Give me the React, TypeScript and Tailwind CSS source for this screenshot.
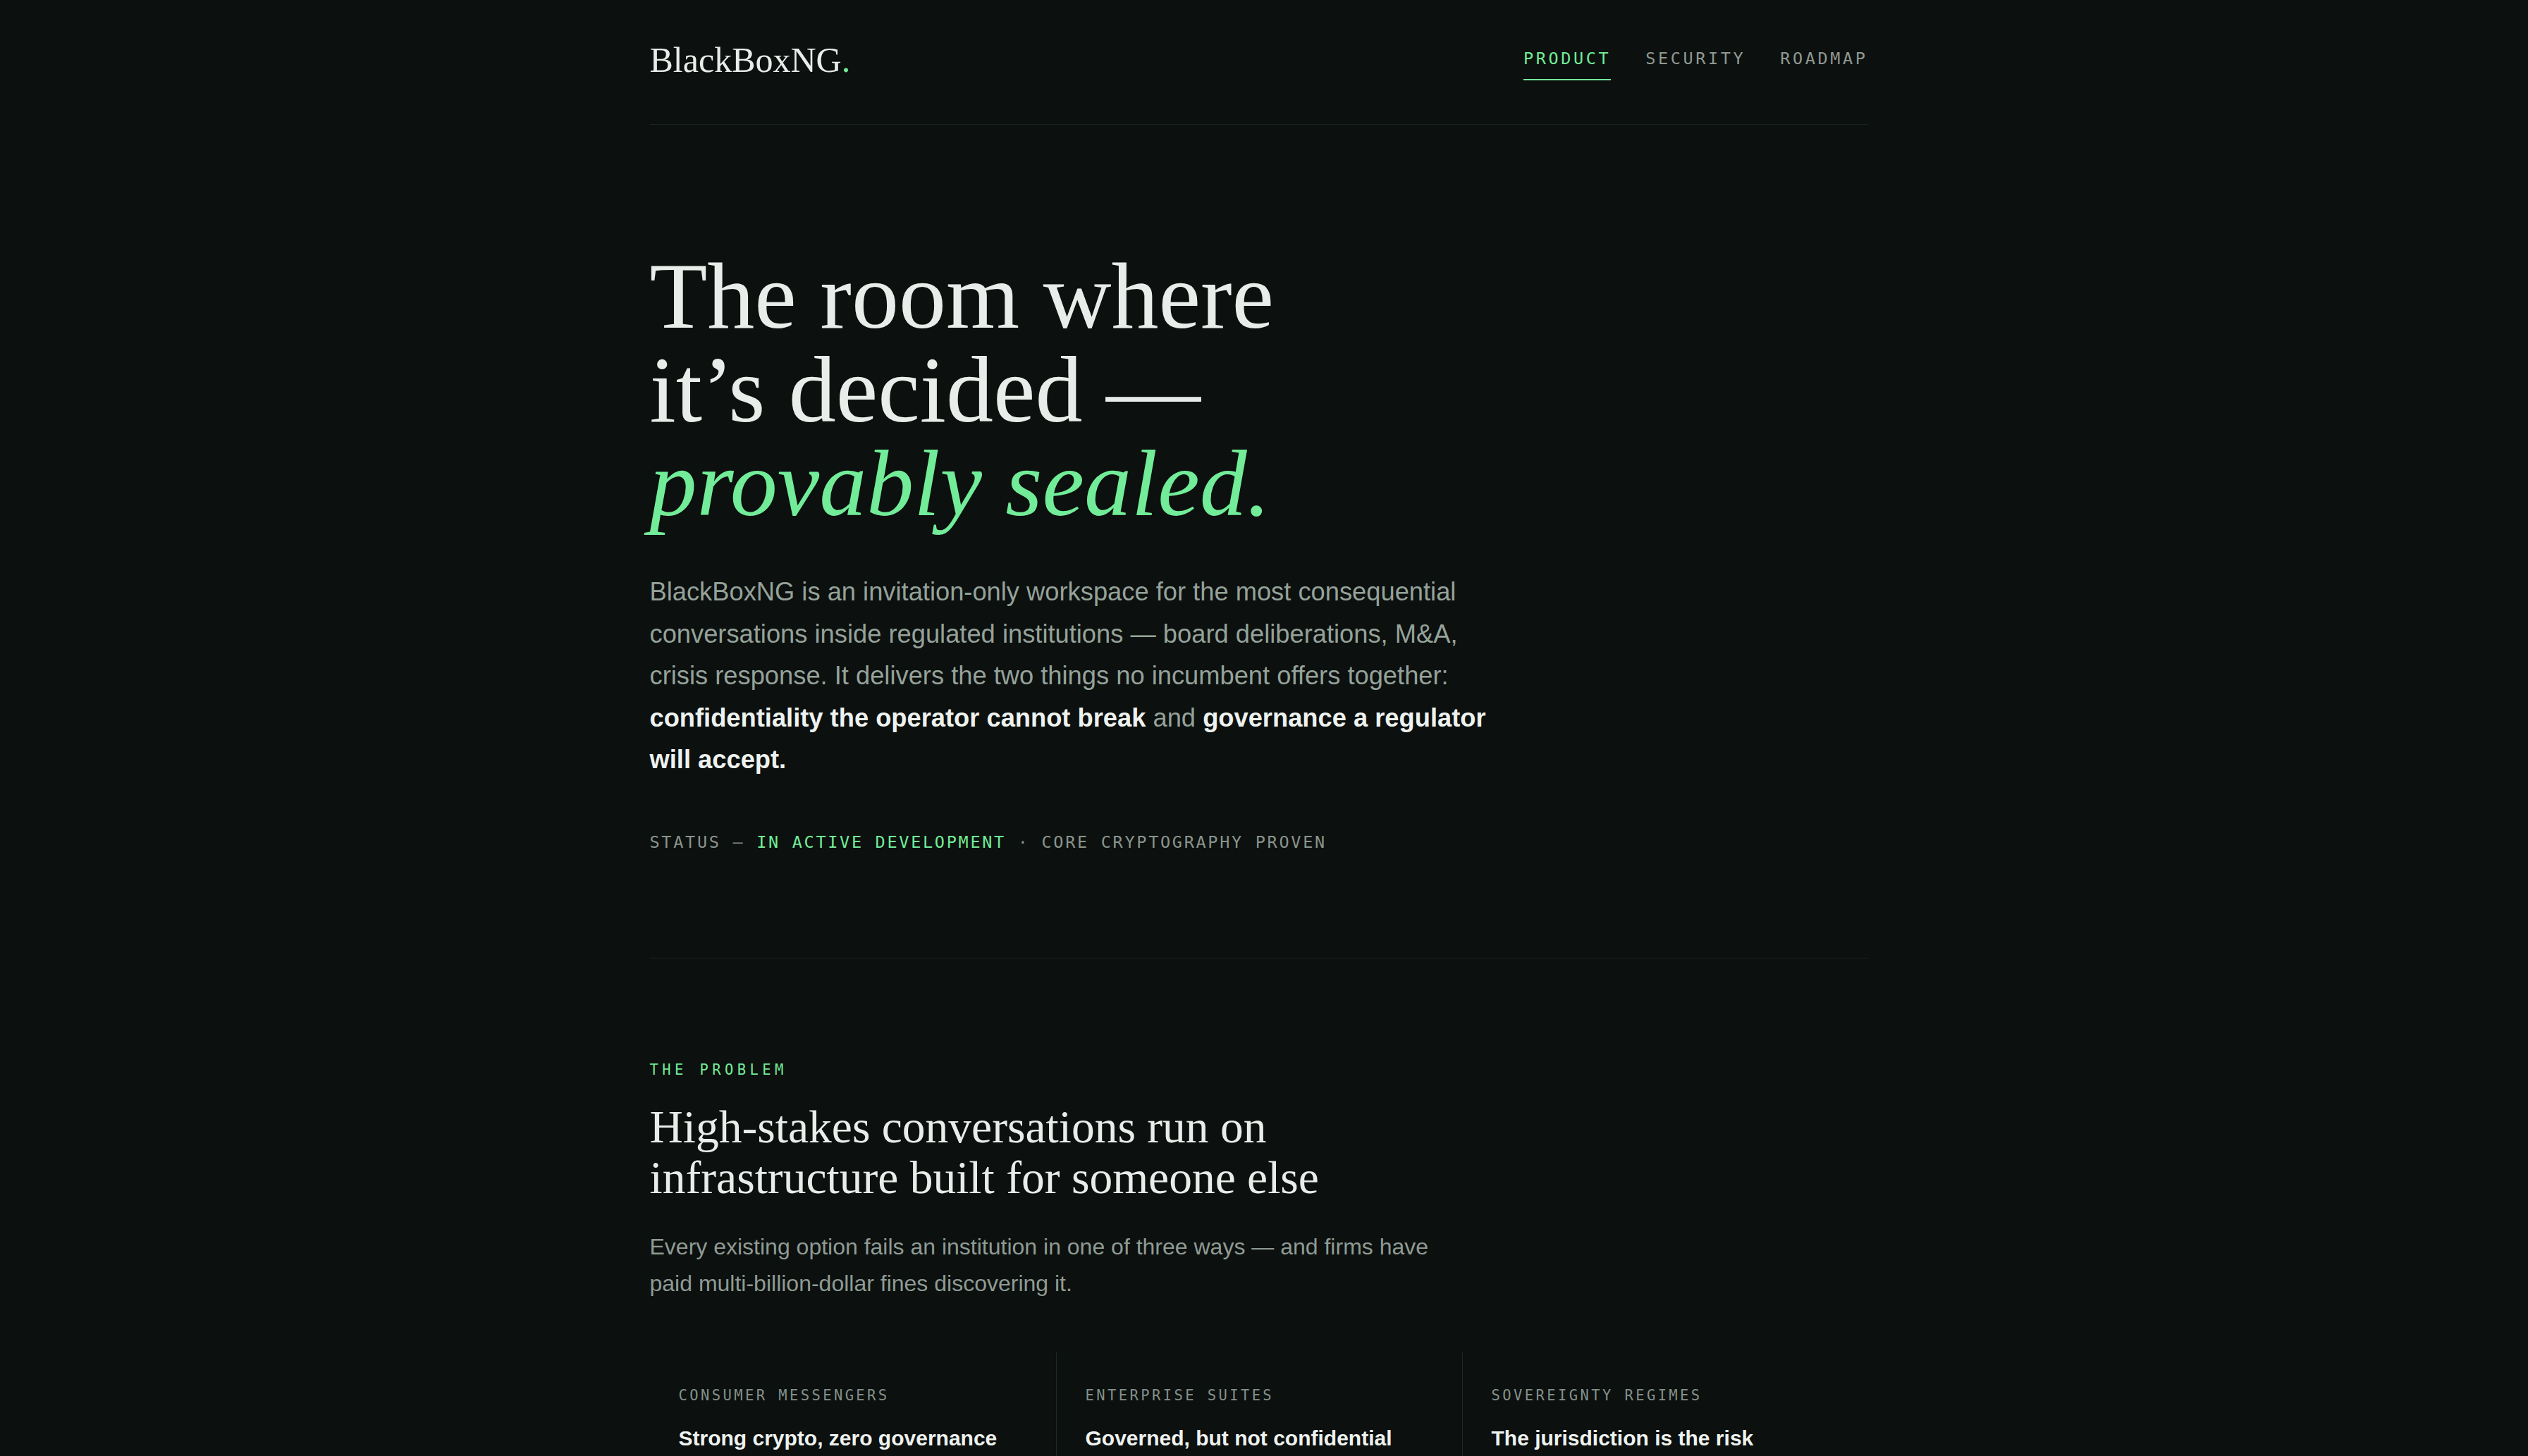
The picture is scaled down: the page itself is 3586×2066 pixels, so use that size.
import React from 'react';

const serif = 'font-["Liberation_Serif",Georgia,serif]';
const sans = 'font-["Liberation_Sans",Arial,sans-serif]';
const mono = 'font-["DejaVu_Sans_Mono","Liberation_Mono",monospace]';

const navItems = [
  { label: 'PRODUCT', active: true },
  { label: 'SECURITY', active: false },
  { label: 'ROADMAP', active: false },
];

const problems = [
  {
    kicker: 'CONSUMER MESSENGERS',
    title: 'Strong crypto, zero governance',
    body: 'End-to-end encryption, but no retention, no supervision and no audit trail a compliance team can stand behind.',
  },
  {
    kicker: 'ENTERPRISE SUITES',
    title: 'Governed, but not confidential',
    body: 'Retention and eDiscovery are built in — and so is the vendor’s ability to read every message.',
  },
  {
    kicker: 'SOVEREIGNTY REGIMES',
    title: 'The jurisdiction is the risk',
    body: 'Data residency promises that hold only as long as the host government allows them to.',
  },
];

const Header: React.FC = () => (
  <header className="flex items-start justify-between h-[177px] border-b border-[#1b241f]">
    <div className={`${serif} pt-[60px] text-[50px] leading-none text-[#e8ede9]`}>
      BlackBoxNG<span className="text-[#72ec98]">.</span>
    </div>
    <nav className={`${mono} flex gap-[49px] pt-[72px] text-[23.5px] leading-none tracking-[3.6px]`}>
      {navItems.map((item) => (
        <a
          key={item.label}
          className={
            item.active
              ? 'pb-[16px] border-b-2 border-[#72ec98] text-[#72ec98]'
              : 'pb-[16px] border-b-2 border-transparent text-[#8f9992]'
          }
        >
          {item.label}
        </a>
      ))}
    </nav>
  </header>
);

const Hero: React.FC = () => (
  <section className="pt-[177px] pb-[146px] border-b border-[#1b241f]">
    <h1 className={`${serif} text-[134px] leading-[133px] font-normal text-[#e8ede9]`}>
      The room where
      <br />
      it’s decided —
      <br />
      <em className="text-[#72ec98]">provably sealed.</em>
    </h1>

    <p className={`${sans} mt-[57px] w-[1215px] text-[36.3px] leading-[59.5px] text-[#95a29a]`}>
      BlackBoxNG is an invitation-only workspace for the most consequential conversations inside
      regulated institutions — board deliberations, M&amp;A, crisis response. It delivers the two
      things no incumbent offers together:{' '}
      <strong className="font-bold text-[#eef2ef]">confidentiality the operator cannot break</strong> and{' '}
      <strong className="font-bold text-[#eef2ef]">governance a regulator will accept.</strong>
    </p>

    <div className={`${mono} mt-[69px] text-[23.5px] leading-[36px] tracking-[2.7px] text-[#8a948d]`}>
      STATUS — <span className="text-[#72ec98]">IN ACTIVE DEVELOPMENT</span> · CORE CRYPTOGRAPHY PROVEN
    </div>
  </section>
);

const Problem: React.FC = () => (
  <section className="pt-[143px] pb-[80px]">
    <div className={`${mono} text-[20.5px] leading-[30px] tracking-[5.4px] text-[#72ec98]`}>THE PROBLEM</div>
    <h2 className={`${serif} mt-[30px] w-[1100px] text-[65.5px] leading-[72px] font-normal text-[#e8ede9]`}>
      High-stakes conversations run on infrastructure built for someone else
    </h2>
    <p className={`${sans} mt-[36px] w-[1170px] text-[32px] leading-[52.6px] text-[#8f9b94]`}>
      Every existing option fails an institution in one of three ways — and firms have paid
      multi-billion-dollar fines discovering it.
    </p>

    <div className="mt-[71px] grid grid-cols-3">
      {problems.map((p, i) => (
        <div
          key={p.kicker}
          className={`px-[41px] pt-[46px] pb-[40px] ${i > 0 ? 'border-l border-[#1f2924]' : ''}`}
        >
          <div className={`${mono} text-[20.5px] leading-[30px] tracking-[3.4px] text-[#84908a]`}>
            {p.kicker}
          </div>
          <h3 className={`${sans} mt-[26px] text-[30px] leading-[40px] font-bold text-[#eef2ef]`}>{p.title}</h3>
          <p className={`${sans} mt-[20px] text-[28px] leading-[46px] text-[#8f9b94]`}>{p.body}</p>
        </div>
      ))}
    </div>
  </section>
);

export default function App() {
  return (
    <div className="min-h-screen bg-[#0c100f] flex justify-center pr-[15px]">
      <div className="w-[1728px]">
        <Header />
        <Hero />
        <Problem />
      </div>
    </div>
  );
}
